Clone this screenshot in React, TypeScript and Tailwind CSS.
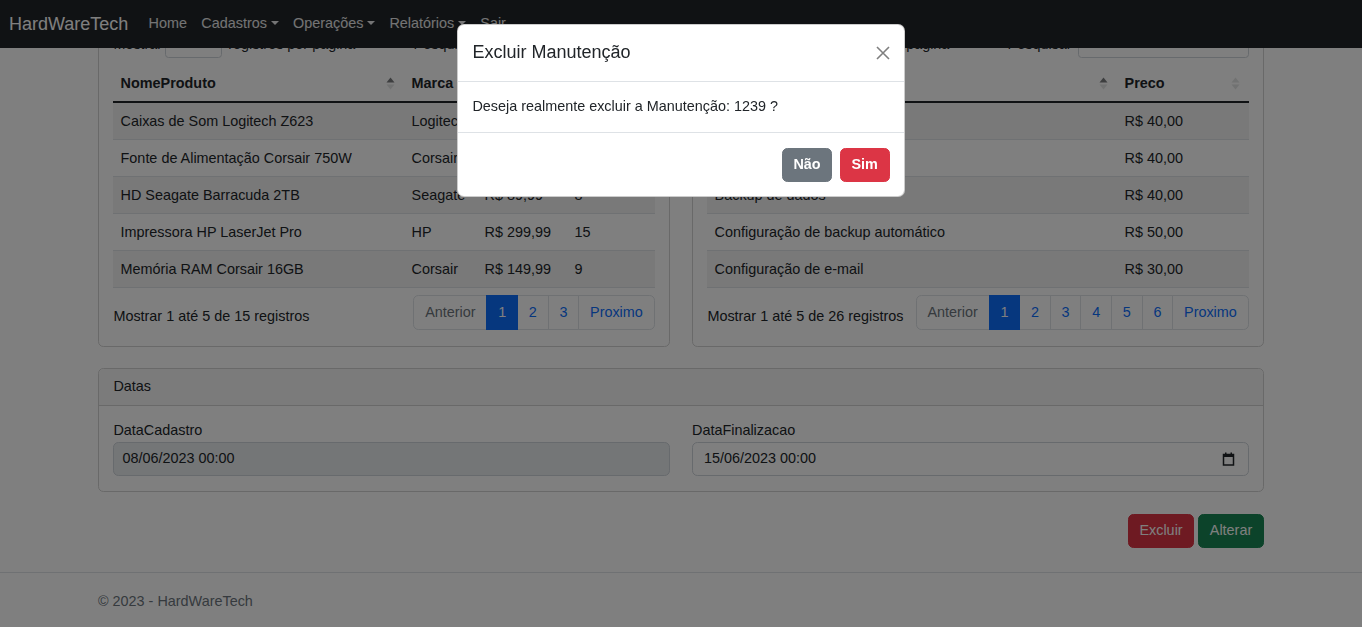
import React from "react";

const SortIcon = ({ active }: { active?: boolean }) => (
  <svg width="9" height="15" viewBox="0 0 9 15" className="shrink-0">
    <path d="M4.5 1.5 L8.5 6.5 L0.5 6.5 Z" fill="#212529" fillOpacity={active ? 0.6 : 0.125} />
    <path d="M4.5 13.5 L8.5 8.5 L0.5 8.5 Z" fill="#212529" fillOpacity={0.125} />
  </svg>
);

const Caret = () => (
  <span className="inline-block w-0 h-0 ml-[3.7px] align-[3.7px] border-t-[4.3px] border-t-current border-x-[4.3px] border-x-transparent" />
);

type Col = { title: string; width: number; active?: boolean };

function DataTable({
  cols,
  rows,
  total,
  pages,
}: {
  cols: Col[];
  rows: string[][];
  total: number;
  pages: number;
}) {
  return (
    <div className="border border-[#d3d3d3] rounded-[5.4px] bg-white p-[14.4px]">
      <div className="flex items-center justify-between h-[28px]">
        <div className="flex items-center">
          <span>Mostrar</span>
          <div className="ml-[3px] mr-[6px] w-[57px] h-[28px] border border-[#ced4da] rounded-[3.6px] flex items-center justify-between pl-[8px] pr-[8px] text-[12.6px]">
            <span>5</span>
            <svg width="10" height="8" viewBox="0 0 16 16">
              <path d="M2 5l6 6 6-6" fill="none" stroke="#343a40" strokeWidth="2" strokeLinecap="round" strokeLinejoin="round" />
            </svg>
          </div>
          <span>registros por pagina</span>
        </div>
        <div className="flex items-center">
          <span>Pesquisar</span>
          <div className="ml-[6px] w-[171px] h-[28px] border border-[#ced4da] rounded-[3.6px]" />
        </div>
      </div>
      <table className="w-full table-fixed border-collapse mt-[8px] mb-[5px]">
        <thead>
          <tr>
            {cols.map((c, i) => (
              <th
                key={i}
                style={{ width: c.width }}
                className="text-left font-bold pl-[7.2px] pr-[9.5px] py-[6.7px] border-b-2 border-[#212529] whitespace-nowrap overflow-hidden"
              >
                <div className="flex items-center justify-between">
                  <span>{c.title}</span>
                  <SortIcon active={c.active} />
                </div>
              </th>
            ))}
          </tr>
        </thead>
        <tbody>
          {rows.map((r, i) => (
            <tr key={i} className={i % 2 === 0 ? "bg-[#f2f2f2]" : "bg-white"}>
              {r.map((cell, j) => (
                <td key={j} className="px-[7.2px] py-[7.2px] border-b border-[#dee2e6] whitespace-nowrap overflow-hidden">
                  {cell}
                </td>
              ))}
            </tr>
          ))}
        </tbody>
      </table>
      <div className="flex items-start justify-between">
        <div className="pt-[13px]">Mostrar 1 até 5 de {total} registros</div>
        <ul className="flex my-[2px]">
          <li className="border border-[#dee2e6] rounded-l-[5.4px] px-[10.8px] py-[5.4px] text-[#6c757d] bg-white">Anterior</li>
          {Array.from({ length: pages }, (_, i) => i + 1).map((p) => (
            <li
              key={p}
              className={
                p === 1
                  ? "-ml-px border border-[#0d6efd] bg-[#0d6efd] text-white px-[10.8px] py-[5.4px] z-[1]"
                  : "-ml-px border border-[#dee2e6] bg-white text-[#0d6efd] px-[10.8px] py-[5.4px]"
              }
            >
              {p}
            </li>
          ))}
          <li className="-ml-px border border-[#dee2e6] rounded-r-[5.4px] px-[10.8px] py-[5.4px] text-[#0d6efd] bg-white">Proximo</li>
        </ul>
      </div>
    </div>
  );
}

export default function App() {
  const leftRows = [
    ["Caixas de Som Logitech Z623", "Logitech", "R$ 499,99", "5"],
    ["Fonte de Alimentação Corsair 750W", "Corsair", "R$ 599,99", "12"],
    ["HD Seagate Barracuda 2TB", "Seagate", "R$ 89,99", "8"],
    ["Impressora HP LaserJet Pro", "HP", "R$ 299,99", "15"],
    ["Memória RAM Corsair 16GB", "Corsair", "R$ 149,99", "9"],
  ];
  const rightRows = [
    ["Atualização de drivers", "R$ 40,00"],
    ["Atualização de sistema", "R$ 40,00"],
    ["Backup de dados", "R$ 40,00"],
    ["Configuração de backup automático", "R$ 50,00"],
    ["Configuração de e-mail", "R$ 30,00"],
  ];

  return (
    <div className="relative h-[627px] overflow-hidden bg-white text-[#212529] text-[14.4px] leading-[1.5] font-['Liberation_Sans',Arial,sans-serif]">
      <nav className="fixed inset-x-0 top-0 z-10 h-12 bg-[#212529] flex items-center pl-[9px]">
        <span className="text-white text-[18px] leading-[27px] mr-[13px]">HardWareTech</span>
        <ul className="flex items-center text-white/90">
          <li className="px-[7.2px]">Home</li>
          <li className="px-[7.2px]">Cadastros<Caret /></li>
          <li className="px-[7.2px]">Operações<Caret /></li>
          <li className="px-[7.2px]">Relatórios<Caret /></li>
          <li className="px-[7.2px]">Sair</li>
        </ul>
      </nav>

      <main className="w-[1166px] mx-auto pt-[15px]">
        <div className="grid grid-cols-2 gap-x-[22px]">
          <DataTable
            cols={[
              { title: "NomeProduto", width: 291, active: true },
              { title: "Marca", width: 73 },
              { title: "Preco", width: 90 },
              { title: "Qtd", width: 88 },
            ]}
            rows={leftRows}
            total={15}
            pages={3}
          />
          <DataTable
            cols={[
              { title: "NomeServico", width: 410, active: true },
              { title: "Preco", width: 132 },
            ]}
            rows={rightRows}
            total={26}
            pages={6}
          />
        </div>

        <div className="mt-[21px] border border-[#d3d3d3] rounded-[5.4px] bg-white">
          <div className="bg-[#f7f7f7] border-b border-[#d3d3d3] rounded-t-[5.4px] px-[14.4px] py-[7.2px]">Datas</div>
          <div className="p-[14.4px] grid grid-cols-2 gap-x-[22px]">
            <div>
              <div>DataCadastro</div>
              <div className="h-[34.4px] border border-[#ced4da] rounded-[5.4px] bg-[#e9ecef] flex items-center pl-[8px]">
                08/06/2023 00:00
              </div>
            </div>
            <div>
              <div>DataFinalizacao</div>
              <div className="h-[34.4px] border border-[#ced4da] rounded-[5.4px] bg-white flex items-center justify-between pl-[11px] pr-[13px]">
                <span>15/06/2023 00:00</span>
                <svg width="13" height="14" viewBox="0 0 13 14">
                  <rect x="1.5" y="2.5" width="10" height="10.5" fill="none" stroke="#212529" strokeWidth="1.5" />
                  <rect x="1.5" y="2.5" width="10" height="2.5" fill="#212529" />
                  <rect x="3" y="0.5" width="1.5" height="3" fill="#212529" />
                  <rect x="8.5" y="0.5" width="1.5" height="3" fill="#212529" />
                </svg>
              </div>
            </div>
          </div>
        </div>

        <div className="mt-[22px] flex justify-end gap-[3.6px]">
          <button className="bg-[#dc3545] border border-[#dc3545] text-white rounded-[5.4px] px-[10.8px] py-[5.4px] leading-[21.6px]">Excluir</button>
          <button className="bg-[#198754] border border-[#198754] text-white rounded-[5.4px] px-[10.8px] py-[5.4px] leading-[21.6px]">Alterar</button>
        </div>
      </main>

      <footer className="mt-[24px] border-t border-[#dee2e6] text-[#6c757d]">
        <div className="w-[1166px] mx-auto leading-[56px]">© 2023 - HardWareTech</div>
      </footer>

      <div className="fixed inset-0 z-40 bg-black/50" />

      <div className="fixed left-1/2 top-[24px] -translate-x-1/2 z-50 w-[448px] bg-white rounded-[7px] border border-black/20">
        <div className="flex items-center justify-between p-[14.4px] border-b border-[#dee2e6]">
          <h5 className="text-[18px] leading-[27px]">Excluir Manutenção</h5>
          <svg width="14" height="14" viewBox="0 0 14 14">
            <path d="M1 1 L13 13 M13 1 L1 13" stroke="#000" strokeOpacity="0.5" strokeWidth="1.6" />
          </svg>
        </div>
        <div className="p-[14.4px]">Deseja realmente excluir a Manutenção: 1239 ?</div>
        <div className="flex justify-end items-center p-[10.8px] border-t border-[#dee2e6]">
          <button className="m-[3.6px] bg-[#6c757d] border border-[#6c757d] text-white font-bold rounded-[5.4px] px-[10.8px] py-[5.4px] leading-[21.6px]">Não</button>
          <button className="m-[3.6px] bg-[#dc3545] border border-[#dc3545] text-white font-bold rounded-[5.4px] px-[10.8px] py-[5.4px] leading-[21.6px]">Sim</button>
        </div>
      </div>
    </div>
  );
}
